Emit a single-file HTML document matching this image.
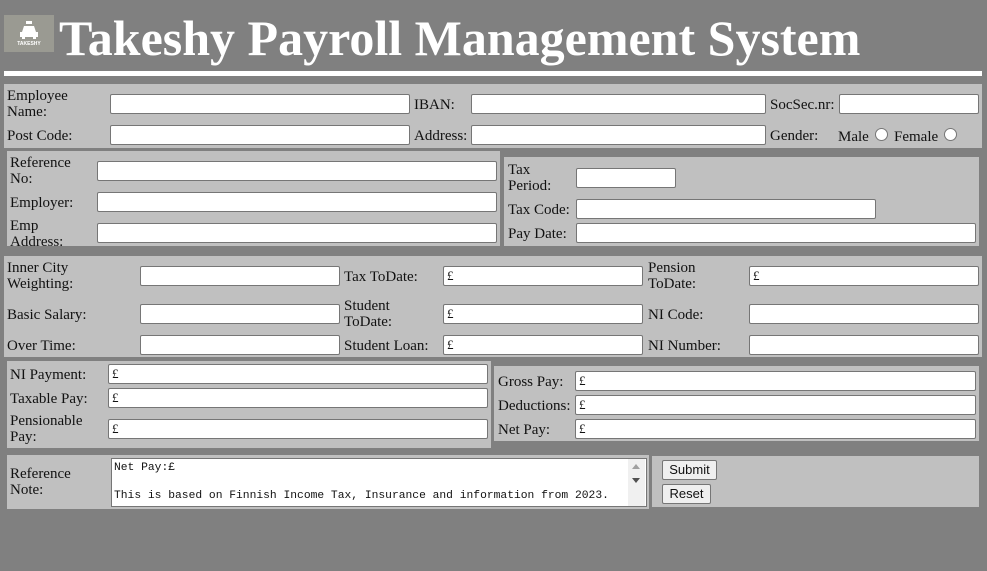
<!DOCTYPE html>
<html><head><meta charset="utf-8"><style>
body{margin:0;width:987px;height:571px;background:#808080;position:relative;overflow:hidden;font-family:"Liberation Serif",serif;font-size:15px;color:#111}
.p{position:absolute;background:#c0c0c0}
.i{position:absolute;background:#fff;border:1px solid #767676;border-radius:2px;box-sizing:border-box;height:20px;font-size:13px;line-height:18px;padding-left:3px;font-family:"Liberation Serif",serif}
.l{position:absolute;line-height:16px;white-space:nowrap;margin-top:1px}
.r{position:absolute;width:13px;height:13px;border:1px solid #767676;border-radius:50%;background:#fff;box-sizing:border-box}
.b{position:absolute;background:#efefef;border:1px solid #767676;border-radius:2px;box-sizing:border-box;font-family:"Liberation Sans",sans-serif;font-size:13px;text-align:center;line-height:17px;height:20px}
</style></head><body>
<div style="position:absolute;left:4px;top:15px;width:50px;height:37px;background:#9a9a92"></div>
<svg style="position:absolute;left:16px;top:20px" width="26" height="26" viewBox="0 0 26 26"><rect x="10" y="1" width="6" height="3" fill="#fff"/><path d="M6 12 L8 6 H18 L20 12 H22 V17 H4 V12Z" fill="#fff"/><rect x="6" y="17" width="3" height="2" fill="#fff"/><rect x="17" y="17" width="3" height="2" fill="#fff"/><text x="13" y="25" font-size="5" fill="#fff" text-anchor="middle" font-family="Liberation Sans" font-weight="bold">TAKESHY</text></svg>
<div style="position:absolute;left:59px;top:8px;font-size:50px;font-weight:bold;color:#fff;line-height:60px;white-space:nowrap">Takeshy Payroll Management System</div>
<div style="position:absolute;left:4px;top:71px;width:978px;height:5px;background:#fff"></div>

<div class="p" style="left:4px;top:84px;width:978px;height:64px"></div>
<div class="l" style="left:7px;top:87px">Employee<br>Name:</div>
<div class="i" style="left:110px;top:94px;width:300px"></div>
<div class="l" style="left:414px;top:96px">IBAN:</div>
<div class="i" style="left:471px;top:94px;width:295px"></div>
<div class="l" style="left:770px;top:96px">SocSec.nr:</div>
<div class="i" style="left:839px;top:94px;width:140px"></div>
<div class="l" style="left:7px;top:127px">Post Code:</div>
<div class="i" style="left:110px;top:125px;width:300px"></div>
<div class="l" style="left:414px;top:127px">Address:</div>
<div class="i" style="left:471px;top:125px;width:295px"></div>
<div class="l" style="left:770px;top:127px">Gender:</div>
<div class="l" style="left:838px;top:128px">Male</div><div class="r" style="left:875px;top:128px"></div>
<div class="l" style="left:894px;top:128px">Female</div><div class="r" style="left:944px;top:128px"></div>

<div class="p" style="left:7px;top:151px;width:493px;height:95px"></div>
<div class="l" style="left:10px;top:154px">Reference<br>No:</div>
<div class="i" style="left:97px;top:161px;width:400px"></div>
<div class="l" style="left:10px;top:194px">Employer:</div>
<div class="i" style="left:97px;top:192px;width:400px"></div>
<div class="l" style="left:10px;top:217px">Emp<br>Address:</div>
<div class="i" style="left:97px;top:223px;width:400px"></div>

<div class="p" style="left:504px;top:157px;width:475px;height:89px"></div>
<div class="l" style="left:508px;top:161px">Tax<br>Period:</div>
<div class="i" style="left:576px;top:168px;width:100px"></div>
<div class="l" style="left:508px;top:201px">Tax Code:</div>
<div class="i" style="left:576px;top:199px;width:300px"></div>
<div class="l" style="left:508px;top:225px">Pay Date:</div>
<div class="i" style="left:576px;top:223px;width:400px"></div>

<div class="p" style="left:4px;top:256px;width:978px;height:101px"></div>
<div class="l" style="left:7px;top:259px">Inner City<br>Weighting:</div>
<div class="i" style="left:140px;top:266px;width:200px"></div>
<div class="l" style="left:344px;top:268px">Tax ToDate:</div>
<div class="i" style="left:443px;top:266px;width:200px">£</div>
<div class="l" style="left:648px;top:259px">Pension<br>ToDate:</div>
<div class="i" style="left:749px;top:266px;width:230px">£</div>
<div class="l" style="left:7px;top:306px">Basic Salary:</div>
<div class="i" style="left:140px;top:304px;width:200px"></div>
<div class="l" style="left:344px;top:297px">Student<br>ToDate:</div>
<div class="i" style="left:443px;top:304px;width:200px">£</div>
<div class="l" style="left:648px;top:306px">NI Code:</div>
<div class="i" style="left:749px;top:304px;width:230px"></div>
<div class="l" style="left:7px;top:337px">Over Time:</div>
<div class="i" style="left:140px;top:335px;width:200px"></div>
<div class="l" style="left:344px;top:337px">Student Loan:</div>
<div class="i" style="left:443px;top:335px;width:200px">£</div>
<div class="l" style="left:648px;top:337px">NI Number:</div>
<div class="i" style="left:749px;top:335px;width:230px"></div>

<div class="p" style="left:7px;top:361px;width:484px;height:87px"></div>
<div class="l" style="left:10px;top:366px">NI Payment:</div>
<div class="i" style="left:108px;top:364px;width:380px">£</div>
<div class="l" style="left:10px;top:390px">Taxable Pay:</div>
<div class="i" style="left:108px;top:388px;width:380px">£</div>
<div class="l" style="left:10px;top:412px">Pensionable<br>Pay:</div>
<div class="i" style="left:108px;top:419px;width:380px">£</div>

<div class="p" style="left:494px;top:366px;width:485px;height:75px"></div>
<div class="l" style="left:498px;top:373px">Gross Pay:</div>
<div class="i" style="left:575px;top:371px;width:401px">£</div>
<div class="l" style="left:498px;top:397px">Deductions:</div>
<div class="i" style="left:575px;top:395px;width:401px">£</div>
<div class="l" style="left:498px;top:421px">Net Pay:</div>
<div class="i" style="left:575px;top:419px;width:401px">£</div>

<div class="p" style="left:7px;top:455px;width:642px;height:54px"></div>
<div class="l" style="left:10px;top:465px">Reference<br>Note:</div>
<div style="position:absolute;left:111px;top:458px;width:536px;height:49px;background:#fff;border:1px solid #767676;box-sizing:border-box;font-family:'Liberation Mono',monospace;font-size:11.3px;line-height:14px;padding:2px 2px;white-space:pre;color:#111">Net Pay:£

This is based on Finnish Income Tax, Insurance and information from 2023.</div>
<div style="position:absolute;left:628px;top:459px;width:17px;height:47px;background:#f0f0f0"></div>
<div style="position:absolute;left:632px;top:464px;width:0;height:0;border:4px solid transparent;border-bottom:5px solid #a0a0a0;border-top:0"></div>
<div style="position:absolute;left:632px;top:478px;width:0;height:0;border:4px solid transparent;border-top:5px solid #505050;border-bottom:0"></div>

<div class="p" style="left:652px;top:456px;width:327px;height:51px"></div>
<div class="b" style="left:662px;top:460px;width:55px">Submit</div>
<div class="b" style="left:662px;top:484px;width:49px">Reset</div>
</body></html>
